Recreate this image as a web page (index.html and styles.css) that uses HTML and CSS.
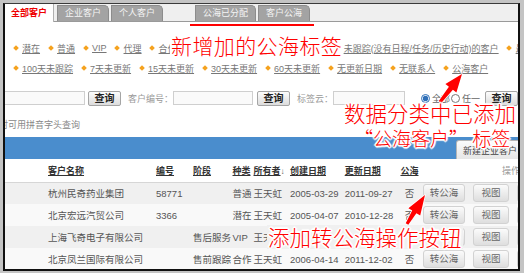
FILE: index.html
```html
<!DOCTYPE html>
<html lang="zh-CN">
<head>
<meta charset="utf-8">
<title>客户管理</title>
<link rel="stylesheet" href="styles.css">
</head>
<body>
<div class="frame">
  <div class="tabbar">
    <span class="tab tab-active">全部客户</span>
    <span class="tab tab-first">企业客户</span>
    <span class="tab">个人客户</span>
    <span class="tab tab-sep">公海已分配</span>
    <span class="tab">客户公海</span>
  </div>

  <div class="tags">
    <div class="tag-row">
      <span class="tag"><i class="dot"></i><a href="#">潜在</a></span>
      <span class="tag"><i class="dot"></i><a href="#">普通</a></span>
      <span class="tag"><i class="dot"></i><a href="#">VIP</a></span>
      <span class="tag"><i class="dot"></i><a href="#">代理</a></span>
      <span class="tag"><i class="dot"></i><a href="#">合作</a></span>
      <span class="tag"><i class="dot"></i><a href="#">供应商</a></span>
      <span class="tag"><i class="dot"></i><a href="#">重点客户</a></span>
      <span class="tag"><i class="dot"></i><a href="#">流失客户</a></span>
      <span class="tag"><i class="dot"></i><a href="#">未跟踪(没有日程/任务/历史行动)的客户</a></span>
      <span class="tag"><i class="dot"></i><a href="#">最近联系</a></span>
    </div>
    <div class="tag-row">
      <span class="tag"><i class="dot"></i><a href="#">100天未跟踪</a></span>
      <span class="tag"><i class="dot"></i><a href="#">7天未更新</a></span>
      <span class="tag"><i class="dot"></i><a href="#">15天未更新</a></span>
      <span class="tag"><i class="dot"></i><a href="#">30天未更新</a></span>
      <span class="tag"><i class="dot"></i><a href="#">60天未更新</a></span>
      <span class="tag"><i class="dot"></i><a href="#">无更新日期</a></span>
      <span class="tag"><i class="dot"></i><a href="#">无联系人</a></span>
      <span class="tag"><i class="dot"></i><a href="#">公海客户</a></span>
    </div>
  </div>

  <div class="search">
    <input class="field field-first" type="text">
    <button class="btn-query btn-first" type="button">查询</button>
    <span class="label">客户编号：</span>
    <input class="field" type="text">
    <button class="btn-query" type="button">查询</button>
    <span class="label">标签云：</span>
    <input class="field field-tag" type="text">
    <label class="radio radio-first"><input type="radio" name="m" checked>全部</label>
    <label class="radio"><input type="radio" name="m">任一</label>
    <button class="btn-query btn-last" type="button">查询</button>
  </div>

  <div class="hint">时可用拼音字头查询</div>

  <div class="bar">
    <button class="bar-btn" type="button">新建企业客户</button>
  </div>

  <table class="grid">
    <colgroup>
      <col class="c-chk"><col class="c-name"><col class="c-num"><col class="c-stage"><col class="c-kind">
      <col class="c-owner"><col class="c-date"><col class="c-date2"><col class="c-pub"><col class="c-ops">
    </colgroup>
    <thead>
      <tr>
        <th></th>
        <th><span class="u">客户名称</span></th>
        <th><span class="u">编号</span></th>
        <th><span class="u">阶段</span></th>
        <th><span class="u">种类</span></th>
        <th><span class="u">所有者</span><span class="sort">↓</span></th>
        <th><span class="u">创建日期</span></th>
        <th><span class="u">更新日期</span></th>
        <th class="center"><span class="u">公海</span></th>
        <th class="center ops-head">操作</th>
      </tr>
    </thead>
    <tbody>
      <tr>
        <td></td><td>杭州民奇药业集团</td><td>58771</td><td></td><td>普通</td><td>王天虹</td>
        <td>2005-03-29</td><td>2011-09-27</td><td class="center">否</td>
        <td><span class="op op-wide">转公海</span><span class="op">视图</span><span class="op">编辑</span></td>
      </tr>
      <tr>
        <td></td><td>北京宏远汽贸公司</td><td>3366</td><td></td><td>潜在</td><td>王天虹</td>
        <td>2005-04-07</td><td>2010-12-28</td><td class="center">否</td>
        <td><span class="op op-wide">转公海</span><span class="op">视图</span><span class="op">编辑</span></td>
      </tr>
      <tr>
        <td></td><td>上海飞奇电子有限公司</td><td></td><td>售后服务</td><td>VIP</td><td>王天虹</td>
        <td>2005-05-12</td><td>2011-10-08</td><td class="center">否</td>
        <td><span class="op op-wide">转公海</span><span class="op">视图</span><span class="op">编辑</span></td>
      </tr>
      <tr>
        <td></td><td>北京凤兰国际有限公司</td><td></td><td>售前跟踪</td><td>合作</td><td>王天虹</td>
        <td>2006-04-14</td><td>2011-12-02</td><td class="center">否</td>
        <td><span class="op op-wide">转公海</span><span class="op">视图</span><span class="op">编辑</span></td>
      </tr>
    </tbody>
  </table>
</div>

<svg class="marks" width="524" height="273" viewBox="0 0 524 273">
  <line x1="190" y1="25" x2="314" y2="25" stroke="#f00" stroke-width="2"/>
  <polygon class="arrow" points="462,74 456.4,92.5 452.9,89.7 441.2,102.9 438.8,101.1 448.9,86.7 445.4,83.9"/>
  <polygon class="arrow" points="425,195 420.2,215.6 416.4,213.2 408.3,224.8 405.7,223.2 412.2,210.6 408.4,208.2"/>
</svg>

<div class="note note-tabs">新增加的公海标签</div>
<div class="note note-data">数据分类中已添加</div>
<div class="note note-data2">“公海客户” 标签</div>
<div class="note note-btn">添加转公海操作按钮</div>
</body>
</html>
```

FILE: styles.css
```css
* { box-sizing: border-box; }
html, body { margin: 0; padding: 0; }
body {
  width: 524px;
  height: 273px;
  overflow: hidden;
  position: relative;
  background: #c4c4c4;
  font-family: "Liberation Sans", "Noto Sans CJK SC", sans-serif;
  font-size: 9px;
  color: #555;
}

.frame {
  margin: 3px 4px 0 3px;
  height: 268px;
  background: #fff;
  border: 2px solid #111;
  border-top: 1px solid #3a3a3a;
  overflow: hidden;
}

/* tabs */
.tabbar {
  display: flex;
  align-items: flex-end;
  height: 18px;
  background: #efefef;
  border-bottom: 1px solid #9a9a9a;
}
.tab {
  flex: none;
  height: 16px;
  line-height: 15px;
  padding: 0 7px;
  margin-left: 2px;
  background: #a3a3a3;
  border: 1px solid #8c8c8c;
  border-bottom: none;
  border-top-right-radius: 5px;
  color: #f4f4f4;
  font-size: 9px;
}
.tab-active {
  height: 18px;
  line-height: 18px;
  margin: 0 0 -1px 0;
  padding: 0 6px;
  background: #fff;
  border: none;
  border-right: 1px solid #b0b0b0;
  border-radius: 0;
  color: #e00;
  font-weight: bold;
}
.tab-first { margin-left: 3px; }
.tab-sep { margin-left: 32px; }

/* tag links */
.tags { padding-top: 16px; }
.tag-row {
  display: flex;
  align-items: center;
  height: 20px;
  white-space: nowrap;
  overflow: hidden;
}
.tag {
  flex: none;
  display: flex;
  align-items: center;
  margin-left: 8px;
}
.dot {
  display: block;
  width: 4px;
  height: 4px;
  margin: 0 4.5px 0 0.5px;
  background: #f5a21e;
  transform: rotate(45deg);
}
.tag a {
  color: #777;
  text-decoration: underline;
  font-size: 9px;
}

/* search row */
.search {
  display: flex;
  align-items: center;
  height: 18px;
  margin-top: 11px;
  white-space: nowrap;
}
.field {
  flex: none;
  width: 80px;
  height: 14px;
  margin: 0;
  padding: 0;
  border: 1px solid #cfcfcf;
  background: #fafafa;
}
.field-first { width: 90px; margin-left: -10px; }
.field-tag { width: 72px; }
.btn-query {
  flex: none;
  width: 33px;
  height: 15px;
  margin: 0 0 0 4px;
  padding: 0;
  border: 1px solid #a5a5a5;
  border-radius: 2px;
  background: linear-gradient(#fdfdfd, #dcdcdc);
  font-family: "Liberation Sans", "Noto Sans CJK SC", sans-serif;
  font-size: 10px;
  font-weight: bold;
  line-height: 13px;
  color: #222;
}
.btn-first { margin-left: 3px; }
.btn-last { margin-left: 5px; }
.label {
  flex: none;
  margin-left: 7px;
  color: #999;
  font-size: 9px;
}
.radio {
  flex: none;
  display: flex;
  align-items: center;
  color: #666;
  font-size: 9px;
}
.radio input {
  width: 9px;
  height: 9px;
  margin: 0 2px 0 0;
  accent-color: #2f6fb8;
}
.radio-first { margin-left: 16px; }
.radio-first + .radio { margin-left: 1px; }

.hint {
  margin: 12px 0 0 -6px;
  height: 12px;
  line-height: 12px;
  font-size: 9px;
  color: #888;
  white-space: nowrap;
}

/* blue bar */
.bar {
  margin-top: 6px;
  height: 22px;
  background: #4a8dcd;
  display: flex;
  align-items: flex-end;
}
.bar-btn {
  flex: none;
  width: 72px;
  height: 19px;
  margin: 0 -10px 0 auto;
  padding: 0 0 0 6px;
  text-align: left;
  border: 1px solid #b5b5b5;
  border-bottom: none;
  border-radius: 3px 3px 0 0;
  background: linear-gradient(#fbfbfb, #e6e6e6);
  font-family: "Liberation Sans", "Noto Sans CJK SC", sans-serif;
  font-size: 9px;
  color: #444;
}

/* table */
.grid {
  table-layout: fixed;
  width: 596px;
  border-collapse: collapse;
  font-size: 9.5px;
  color: #555;
}
.c-chk { width: 41px; }
.c-name { width: 108px; }
.c-num { width: 37px; }
.c-stage { width: 39.5px; }
.c-kind { width: 21px; }
.c-owner { width: 36.5px; }
.c-date { width: 54.7px; }
.c-date2 { width: 55.3px; }
.c-pub { width: 23px; }
.c-ops { width: 180px; }

.grid th {
  height: 23px;
  padding: 0 0 0 2px;
  text-align: left;
  font-size: 9px;
  font-weight: bold;
  color: #333;
  background: #fff;
  border-bottom: 1px solid #d6d6d6;
  white-space: nowrap;
  overflow: hidden;
}
.grid th .u { text-decoration: underline; }
.grid th .sort { font-weight: normal; font-size: 8px; color: #555; }
.grid th.ops-head { color: #999; font-weight: normal; }
.grid td {
  height: 22px;
  padding: 0 0 0 2px;
  white-space: nowrap;
  overflow: hidden;
}
.grid .center { text-align: center; padding: 0; }
.grid tbody tr:nth-child(odd) { background: #f0f0f0; }
.grid tbody tr:nth-child(even) { background: #f9f9f9; }

.op {
  display: inline-block;
  width: 36px;
  height: 18px;
  line-height: 16px;
  margin-right: 8px;
  vertical-align: middle;
  text-align: center;
  border: 1px solid #d2d2d2;
  border-radius: 3px;
  background: linear-gradient(#fbfbfb, #dedede);
  color: #666;
  font-size: 9.5px;
}
.op-wide { width: 42px; }

/* annotations */
.marks {
  position: absolute;
  left: 0;
  top: 0;
  pointer-events: none;
}
.arrow {
  fill: #f00;
  stroke: #fff;
  stroke-width: 1.5;
  stroke-linejoin: round;
  paint-order: stroke;
}
.note {
  position: absolute;
  color: #f00;
  font-family: "Noto Sans CJK SC", sans-serif;
  font-weight: 300;
  line-height: 1;
  white-space: nowrap;
  text-shadow:
    1px 0 0 #fff, -1px 0 0 #fff, 0 1px 0 #fff, 0 -1px 0 #fff,
    1px 1px 0 #fff, -1px -1px 0 #fff, 1px -1px 0 #fff, -1px 1px 0 #fff,
    2px 0 1px #fff, -2px 0 1px #fff, 0 2px 1px #fff, 0 -2px 1px #fff;
}
.note-tabs {
  left: 170px;
  top: 34px;
  padding: 1px;
  font-size: 21px;
  letter-spacing: 0.4px;
  background: #fff;
}
.note-data {
  left: 344px;
  top: 102px;
  font-size: 21.5px;
}
.note-data2 {
  left: 354px;
  top: 128px;
  font-size: 19px;
}
.note-btn {
  left: 267px;
  top: 225px;
  padding: 1px;
  font-size: 21.5px;
  background: #f0f0f0;
}
```
